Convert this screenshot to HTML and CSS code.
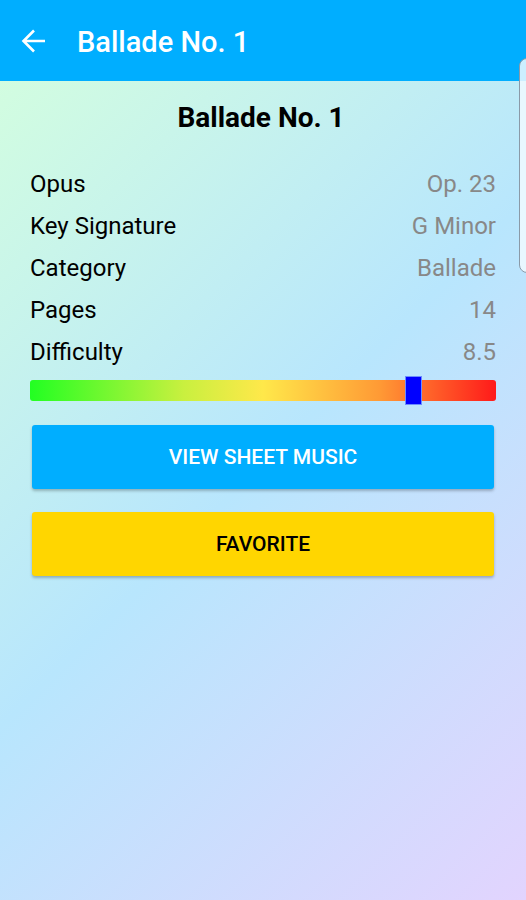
FILE: index.html
```html
<!DOCTYPE html>
<html>
<head>
<meta name="viewport" content="width=device-width, initial-scale=1.0">
<link rel="stylesheet" href="styles.css">
</head>
<body>
<div class="toolbar">
  <svg class="back" width="26" height="26" viewBox="0 0 26 26"><path d="M24 13H3.5M13 2.5L2.5 13 13 23.5" fill="none" stroke="#fff" stroke-width="2.6"/></svg>
  <span class="toolbar-title">Ballade No. 1</span>
</div>
<div class="content">
  <h1>Ballade No. 1</h1>
  <div class="row"><span>Opus</span><span class="value">Op. 23</span></div>
  <div class="row"><span>Key Signature</span><span class="value">G Minor</span></div>
  <div class="row"><span>Category</span><span class="value">Ballade</span></div>
  <div class="row"><span>Pages</span><span class="value">14</span></div>
  <div class="row"><span>Difficulty</span><span class="value">8.5</span></div>
  <div class="meter">
    <div class="thumb" style="left:80.5%"></div>
  </div>
  <div class="btn btn-blue">VIEW SHEET MUSIC</div>
  <div class="btn btn-yellow">FAVORITE</div>
</div>
<div class="edge"></div>
</body>
</html>
```

FILE: styles.css
```css
html, body {
  margin: 0;
  padding: 0;
  height: 100%;
}
body {
  font-family: Roboto, "Noto Sans", sans-serif;
  display: flex;
  flex-direction: column;
  background: #d2fde1;
}
.toolbar {
  height: 81px;
  background-color: #00aeff;
  display: flex;
  align-items: center;
  padding-left: 21px;
  flex-shrink: 0;
}
.back {
  width: 26px;
  height: 26px;
}
.toolbar-title {
  color: #fff;
  font-size: 29px;
  font-weight: 500;
  margin-left: 30px;
  margin-top: 2px;
}
.content {
  flex: 1;
  background: linear-gradient(135deg, #d2fde0 0%, #b8e6fd 48%, #e2d4fe 100%);
  padding: 0 30px;
}
h1 {
  text-align: center;
  font-size: 28px;
  font-weight: bold;
  margin: 19px 4px 27px 0;
  line-height: 36px;
  color: #000;
}
.row {
  display: flex;
  justify-content: space-between;
  font-size: 24px;
  line-height: 42px;
  color: #000;
}
.value {
  color: #888;
}
.meter {
  position: relative;
  height: 21px;
  margin-top: 7px;
  border-radius: 3px;
  background: linear-gradient(90deg, #22ff22 0%, #c9f03f 33%, #ffe84a 50%, #ff9a35 75%, #ff1a1a 100%);
}
.thumb {
  position: absolute;
  top: -4px;
  width: 15px;
  height: 27px;
  background-color: #0000ff;
  border: 1px solid #6c8cff;
}
.btn {
  margin: 24px 2px 0;
  height: 64px;
  display: flex;
  align-items: center;
  justify-content: center;
  font-size: 21px;
  font-weight: 500;
  border-radius: 3px;
  box-shadow: 0 2px 3px rgba(0, 0, 0, 0.25);
}
.btn-blue {
  background-color: #00aeff;
  color: #fff;
}
.btn-yellow {
  background-color: #ffd600;
  color: #000;
  margin-top: 23px;
}
.edge {
  position: absolute;
  left: 519px;
  top: 58px;
  width: 14px;
  height: 213px;
  border: 1px solid #8a9aa8;
  border-radius: 8px;
  background: rgba(240, 250, 255, 0.85);
}
```
